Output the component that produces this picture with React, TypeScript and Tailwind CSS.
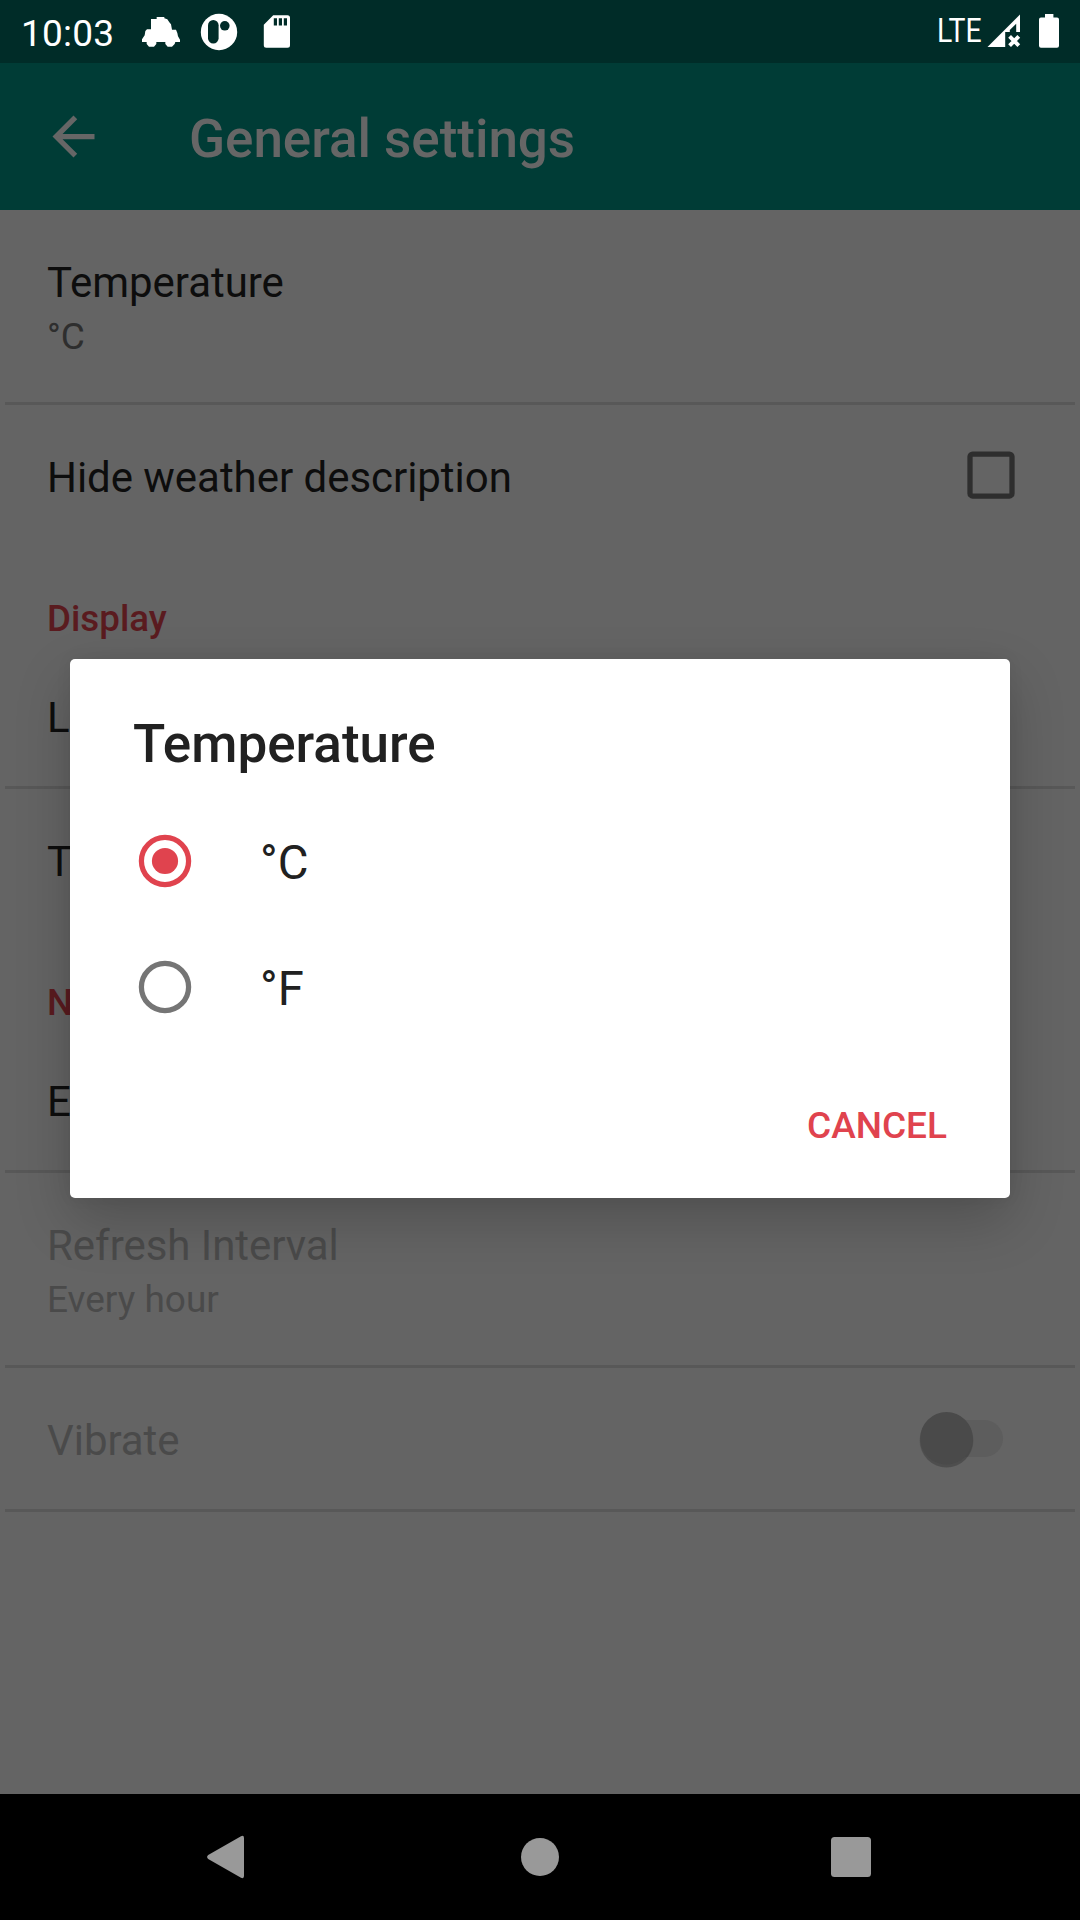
import type { ReactNode } from 'react';

function StatusBar() {
  return (
    <div className="flex h-[63px] items-center justify-between bg-[#002c28] pr-[20px] pl-[21px] text-white">
      <div className="flex items-center">
        <span className="w-[120px] pt-[4px] text-[37px] leading-[43px] tracking-[0.2px]">10:03</span>
        <svg className="h-[36px] w-[40px]" viewBox="423 41 120 108" fill="currentColor">
          <path d="M470 56V50H493V54L502 57L508 66L513 72L516 88H528L532 98L534 108L540 118V125H526L524 131L516 139H503L496 131V125H469V131L462 139H447L440 131V125H426V117L434 105L436 92L441 87H453V56Z" />
        </svg>
        <svg className="ml-[19px] h-[38px] w-[38px]" viewBox="0 0 38 38">
          <circle cx="19" cy="19" r="18.2" fill="currentColor" />
          <rect x="8" y="7" width="10.6" height="23.5" rx="5.3" fill="#002c28" />
          <circle cx="24.8" cy="12.8" r="4.8" fill="#002c28" />
        </svg>
        <svg className="ml-[24px] h-[35px] w-[30px]" viewBox="0 0 30 35">
          <path d="M11.2 1.3H25.5A2.5 2.5 0 0 1 28 3.8V31.3A2.5 2.5 0 0 1 25.5 33.8H4.3A2.5 2.5 0 0 1 1.8 31.3V10.8Z" fill="currentColor" />
          <path d="M11.8 4.3H15V11.5H11.8ZM16.8 4.3H20V11.5H16.8ZM21.8 4.3H25V11.5H21.8Z" fill="#002c28" />
        </svg>
      </div>
      <div className="flex items-center">
        <span className="w-[50px] origin-left scale-x-[0.86] pb-[2px] text-[33px] leading-[38px]">LTE</span>
        <svg className="h-[35px] w-[35px]" viewBox="0 0 35 35" fill="currentColor">
          <path d="M33 .5V18H29.2V9.8L22.8 16V18H18.2V33H.5Z" />
          <path d="M22.6 22.4L31.8 31.6M31.8 22.4L22.6 31.6" stroke="currentColor" strokeWidth="3.9" />
        </svg>
        <svg className="ml-[16px] h-[35px] w-[22px]" viewBox="0 0 22 35" fill="currentColor">
          <path d="M7 0H15.4V3.6H19A2 2 0 0 1 21 5.6V31.8A2 2 0 0 1 19 33.8H3A2 2 0 0 1 1 31.8V5.6A2 2 0 0 1 3 3.6H7Z" />
        </svg>
      </div>
    </div>
  );
}

function Toolbar() {
  return (
    <header className="flex h-[147px] items-center bg-[#003c36] pl-[42px] text-[#666666]">
      <svg className="h-[63px] w-[63px]" viewBox="0 0 24 24" fill="currentColor">
        <path d="M20 11H7.83l5.59-5.59L12 4l-8 8 8 8 1.41-1.41L7.83 13H20v-2z" />
      </svg>
      <h1 className="ml-[84px] pt-[5px] text-[53px] leading-[62px] font-medium tracking-[-0.04px]">General settings</h1>
    </header>
  );
}

type RowProps = {
  title: string;
  summary?: string;
  disabled?: boolean;
  control?: ReactNode;
};

function Row({ title, summary, disabled, control }: RowProps) {
  return (
    <div className={`flex justify-between ${summary ? 'h-[192px]' : 'h-[141px]'}`}>
      <div className="pt-[48px] pl-[47px]">
        <div className={`text-[42px] leading-[49px] tracking-[-0.04px] ${disabled ? 'text-[#4a4a4a]' : 'text-[#0d0d0d]'}`}>{title}</div>
        {summary && (
          <div className={`mt-2 text-[37px] leading-[43px] ${disabled ? 'text-[#4a4a4a]' : 'text-[#2e2e2e]'}`}>{summary}</div>
        )}
      </div>
      {control && <div className="flex items-center">{control}</div>}
    </div>
  );
}

function Divider() {
  return <div className="mx-[5px] h-[3px] bg-[#585858]" />;
}

function SectionHeader({ children }: { children: ReactNode }) {
  return (
    <h2 className="h-[99px] pt-[51px] pl-[47px] text-[36.75px] leading-[43px] font-medium text-[#5a1b1f]">{children}</h2>
  );
}

function Checkbox() {
  return (
    <svg className="mr-[65px] h-[49px] w-[48px]" viewBox="0 0 48 49" fill="none">
      <rect x="3" y="3" width="42" height="42" rx="2.6" stroke="#2e2e2e" strokeWidth="5.25" />
    </svg>
  );
}

function Switch() {
  return (
    <svg className="mr-[72px] h-[69px] w-[93px]" viewBox="0 0 93 69">
      <rect x="12" y="16" width="76" height="37" rx="18.5" fill="#5d5d5d" />
      <circle cx="31.5" cy="36.5" r="27" fill="#000" fillOpacity="0.1" />
      <circle cx="31.5" cy="37" r="26.4" fill="#000" fillOpacity="0.12" />
      <circle cx="31.5" cy="34.3" r="26.3" fill="#4a4a4a" />
    </svg>
  );
}

function RadioOption({ label, checked }: { label: string; checked?: boolean }) {
  return (
    <div className="flex h-[126px] items-center pl-[68px]">
      <svg className={`h-[54px] w-[54px] ${checked ? 'text-[#e0434e]' : 'text-[#757575]'}`} viewBox="0 0 54 54">
        <circle cx="27" cy="27" r="23.6" fill="none" stroke="currentColor" strokeWidth="5.25" />
        {checked && <circle cx="27" cy="27" r="13.1" fill="currentColor" />}
      </svg>
      <span className="ml-[68px] pt-[4px] text-[47.25px] leading-[56px] text-[#212121]">{label}</span>
    </div>
  );
}

function TemperatureDialog() {
  return (
    <div
      role="dialog"
      className="absolute top-[659px] left-[70px] flex h-[539px] w-[940px] flex-col rounded-[5px] bg-white shadow-[0_22px_56px_rgba(0,0,0,0.2),0_0_16px_rgba(0,0,0,0.06)]"
    >
      <h2 className="h-[139px] pt-[54px] pl-[63px] text-[53px] leading-[62px] font-medium text-[#212121]">Temperature</h2>
      <RadioOption label="°C" checked />
      <RadioOption label="°F" />
      <div className="flex justify-end pt-[54px] pr-[63px]">
        <button className="text-[37px] leading-[43px] font-medium text-[#e0434e]">CANCEL</button>
      </div>
    </div>
  );
}

function NavigationBar() {
  return (
    <nav className="flex h-[126px] items-center bg-black pl-[206px] text-[#999999]">
      <svg className="h-[44px] w-[40px]" viewBox="0 0 40 44" fill="currentColor">
        <path d="M35 1.2Q38 0 38 3V41Q38 44 35 42.8L2.2 24Q0 22 2.2 20Z" />
      </svg>
      <svg className="ml-[274px] h-[40px] w-[40px]" viewBox="0 0 40 40" fill="currentColor">
        <circle cx="20" cy="20" r="19" />
      </svg>
      <svg className="ml-[270px] h-[40px] w-[42px]" viewBox="0 0 42 40" fill="currentColor">
        <rect x="1" y="0" width="40" height="40" rx="3.5" />
      </svg>
    </nav>
  );
}

export default function App() {
  return (
    <div className="relative flex h-[1920px] w-[1080px] flex-col overflow-hidden bg-[#646464] font-['Roboto',sans-serif]">
      <StatusBar />
      <Toolbar />
      <main className="flex-1">
        <Row title="Temperature" summary="°C" />
        <Divider />
        <Row title="Hide weather description" control={<Checkbox />} />
        <SectionHeader>Display</SectionHeader>
        <Row title="L" />
        <Divider />
        <Row title="T" />
        <SectionHeader>N</SectionHeader>
        <Row title="E" />
        <Divider />
        <Row title="Refresh Interval" summary="Every hour" disabled />
        <Divider />
        <Row title="Vibrate" disabled control={<Switch />} />
        <Divider />
      </main>
      <NavigationBar />
      <TemperatureDialog />
    </div>
  );
}
